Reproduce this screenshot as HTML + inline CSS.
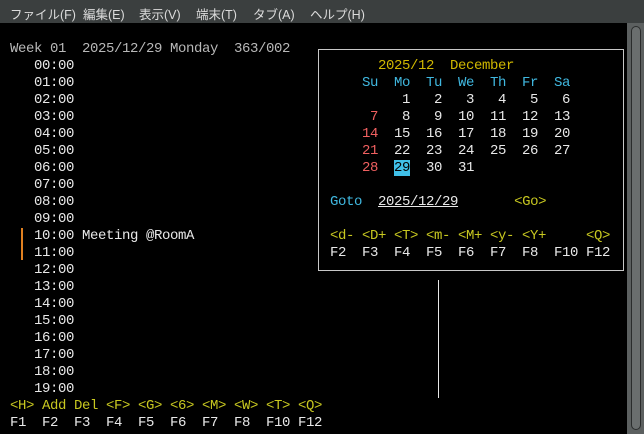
<!DOCTYPE html>
<html><head><meta charset="utf-8"><style>
body{margin:0;width:644px;height:434px;background:#000;overflow:hidden;position:relative;font-family:"Liberation Mono","Noto Sans CJK JP",monospace;}
#menu{position:absolute;left:0;top:0;width:644px;height:23px;background:#3b3f3f;}
#menu span{position:absolute;top:4px;font:12.5px "Liberation Sans","Noto Sans CJK JP",sans-serif;color:#dcdcdc;}
#sb{position:absolute;left:627px;top:23px;width:17px;height:411px;background:#5c6060;}
#th{position:absolute;left:4px;top:3px;width:8px;height:402px;border:1px solid #2a2c2c;border-radius:5px;background:#6a6e6e;}
.t{position:absolute;font-size:14px;letter-spacing:-0.4px;line-height:17px;height:17px;white-space:pre;color:#e8e8e8;}
.g{color:#b8b8b8}.y{color:#c8c820}.yo{color:#d0b800}.c{color:#40b8e0}.r{color:#f06060}
#pop{position:absolute;left:318px;top:49px;width:304px;height:220px;border:1px solid #c8c8c8;}
</style></head><body>
<div id="menu"><span style="left:10px">ファイル(F)</span><span style="left:83px">編集(E)</span><span style="left:139px">表示(V)</span><span style="left:196px">端末(T)</span><span style="left:253px">タブ(A)</span><span style="left:310px">ヘルプ(H)</span></div>
<div id="sb"><div id="th"></div></div>
<div class="t g" style="left:10px;top:41px">Week 01  2025/12/29 Monday  363/002</div>
<div class="t" style="left:34px;top:58px">00:00
01:00
02:00
03:00
04:00
05:00
06:00
07:00
08:00
09:00
10:00 Meeting @RoomA
11:00
12:00
13:00
14:00
15:00
16:00
17:00
18:00
19:00</div>
<div style="position:absolute;left:21px;top:228px;width:2px;height:32px;background:#e08020"></div>
<div style="position:absolute;left:438px;top:280px;width:1px;height:118px;background:#e8e8e8"></div>
<div class="t y" style="left:10px;top:398px">&lt;H&gt; Add Del &lt;F&gt; &lt;G&gt; &lt;6&gt; &lt;M&gt; &lt;W&gt; &lt;T&gt; &lt;Q&gt;</div>
<div class="t" style="left:10px;top:415px">F1  F2  F3  F4  F5  F6  F7  F8  F10 F12</div>
<div id="pop"></div>
<div class="t yo" style="left:378px;top:58px">2025/12  December</div>
<div class="t c" style="left:362px;top:75px">Su  Mo  Tu  We  Th  Fr  Sa</div>
<div class="t" style="left:362px;top:92px">     1   2   3   4   5   6</div>
<div class="t" style="left:362px;top:109px"><span class="r"> 7</span>   8   9  10  11  12  13</div>
<div class="t" style="left:362px;top:126px"><span class="r">14</span>  15  16  17  18  19  20</div>
<div class="t" style="left:362px;top:143px"><span class="r">21</span>  22  23  24  25  26  27</div>
<div class="t" style="left:362px;top:160px"><span class="r">28</span>  <span style="background:#40c0e8;color:#000">29</span>  30  31</div>
<div class="t" style="left:330px;top:194px"><span class="c">Goto</span>  <span style="text-decoration:underline">2025/12/29</span>       <span class="y">&lt;Go&gt;</span></div>
<div class="t y" style="left:330px;top:228px">&lt;d- &lt;D+ &lt;T&gt; &lt;m- &lt;M+ &lt;y- &lt;Y+     &lt;Q&gt;</div>
<div class="t" style="left:330px;top:245px">F2  F3  F4  F5  F6  F7  F8  F10 F12</div>
</body></html>
